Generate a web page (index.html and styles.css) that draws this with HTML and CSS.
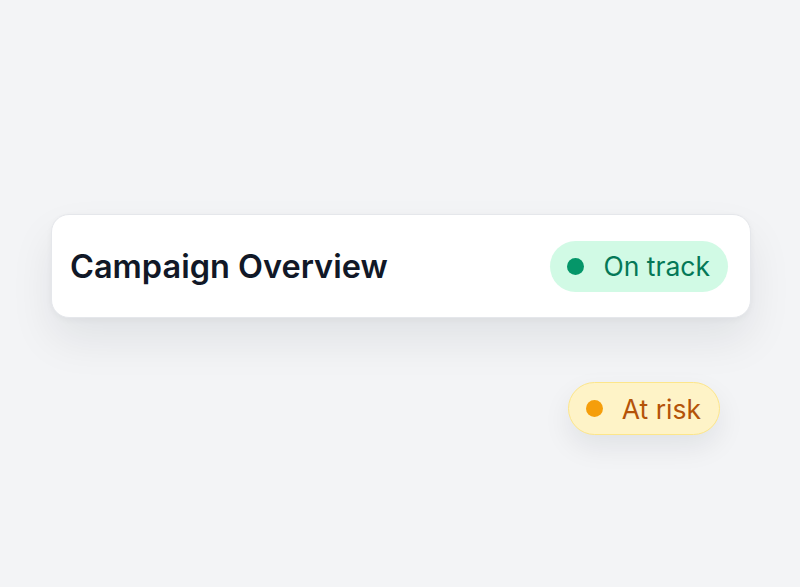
FILE: index.html
```html
<!DOCTYPE html>
<html lang="en">
<head>
<meta charset="utf-8">
<title>Campaign Overview</title>
<link rel="stylesheet" href="styles.css">
</head>
<body>
<main class="stage">
  <section class="card">
    <h1 class="card-title">Campaign Overview</h1>
    <span class="pill pill-success"><span class="dot"></span>On track</span>
  </section>
  <div class="floating">
    <span class="pill pill-warning"><span class="dot"></span>At risk</span>
  </div>
</main>
</body>
</html>
```
FILE: styles.css
```css
* { box-sizing: border-box; }
html, body { margin: 0; padding: 0; }
body {
  background: #f3f4f6;
  font-family: Inter, "Noto Sans", sans-serif;
  width: 800px;
  height: 587px;
  overflow: hidden;
}
.stage {
  padding: 214px 49px 0 51px;
  display: flex;
  flex-direction: column;
}
.card {
  height: 104px;
  background: #ffffff;
  border: 1px solid #e5e7eb;
  border-radius: 18px;
  display: flex;
  align-items: center;
  justify-content: space-between;
  padding: 0 22px 0 18px;
  box-shadow: 0 22px 44px rgba(17, 24, 39, 0.08), 0 2px 6px rgba(17, 24, 39, 0.04);
}
.card-title {
  margin: 0;
  font-size: 32.5px;
  font-weight: 600;
  color: #111827;
}
.pill {
  display: inline-flex;
  align-items: center;
  gap: 19px;
  height: 51px;
  padding: 0 18px 0 17px;
  border-radius: 999px;
  font-size: 26.5px;
  font-weight: 400;
}
.dot {
  width: 17px;
  height: 17px;
  border-radius: 50%;
  flex: none;
}
.pill-success {
  background: #d1fae5;
  color: #047857;
}
.pill-success .dot { background: #059669; }
.floating {
  display: flex;
  justify-content: flex-end;
  padding-right: 31px;
  margin-top: 64px;
}
.pill-warning {
  height: 53px;
  padding: 0 18px 0 17px;
  background: #fef3c7;
  border: 1px solid #fde68a;
  color: #b45309;
  box-shadow: 0 12px 28px rgba(17, 24, 39, 0.08);
}
.pill-warning .dot { background: #f59e0b; }
```
